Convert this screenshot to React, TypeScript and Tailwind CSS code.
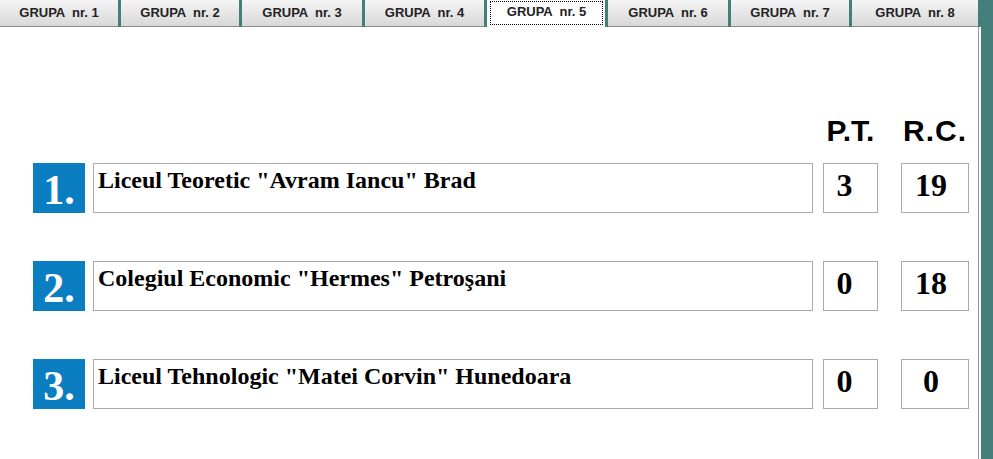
const tabs = [
  { label: 'GRUPA  nr. 1', w: 'w-[118px]' },
  { label: 'GRUPA  nr. 2', w: 'w-[118px]' },
  { label: 'GRUPA  nr. 3', w: 'w-[120px]' },
  { label: 'GRUPA  nr. 4', w: 'w-[119px]' },
  { label: 'GRUPA  nr. 5', w: 'w-[118px]', active: true },
  { label: 'GRUPA  nr. 6', w: 'w-[120px]' },
  { label: 'GRUPA  nr. 7', w: 'w-[118px]' },
  { label: 'GRUPA  nr. 8', w: 'w-[126px]' },
]

const rows = [
  { n: '1.', name: 'Liceul Teoretic "Avram Iancu" Brad', pt: '3', rc: '19' },
  { n: '2.', name: 'Colegiul Economic "Hermes" Petroşani', pt: '0', rc: '18' },
  { n: '3.', name: 'Liceul Tehnologic "Matei Corvin" Hunedoara', pt: '0', rc: '0' },
]

const serif = 'font-["Liberation_Serif",serif]'

export default function App() {
  return (
    <div className="w-[993px] h-[459px] bg-[#437e7b] overflow-hidden font-['Liberation_Sans',Arial,sans-serif]">
      {/* Tabs */}
      <div className="flex gap-[3px] h-[27px] w-[978px]">
        {tabs.map(t =>
          t.active ? (
            <div key={t.label} className={`${t.w} h-[27px] bg-white p-[1px_2px_2px_3px]`}>
              <div className="h-full border border-dotted border-black flex items-center justify-center pb-[2px]">
                <span className="whitespace-pre text-[13px] font-bold text-[#222]">{t.label}</span>
              </div>
            </div>
          ) : (
            <div key={t.label}
              className={`${t.w} h-[27px] bg-gradient-to-b from-[#f5f5f5] to-[#d8d8d8] border-b border-[#8c8c8c] flex items-center justify-center`}>
              <span className="whitespace-pre text-[13px] font-bold text-[#222]">{t.label}</span>
            </div>
          )
        )}
      </div>

      {/* Content */}
      <div className="w-[981px] h-[432px] bg-white pr-[2px]">
        <div className="h-full border-r border-[#999] pl-[33px] pt-[88px]">
          {/* Column headers */}
          <div className="flex h-[32px] text-[30px] leading-[32px] font-bold text-black">
            <div className="w-[780px]" />
            <div className="ml-[10px] w-[55px] text-center">P.T.</div>
            <div className="ml-[23px] w-[68px] text-center tracking-[1px]">R.C.</div>
          </div>

          <div className="mt-[16px] flex flex-col gap-[48px]">
            {rows.map(r => (
              <div key={r.n} className="flex h-[50px]">
                <div className={`w-[52px] h-[50px] bg-[#0b7ec2] text-white text-center text-[42px] leading-[54px] font-bold ${serif}`}>
                  {r.n}
                </div>
                <div className={`ml-[8px] w-[720px] h-[50px] border border-[#aaa] pl-[4px] pt-[2px] text-[24px] leading-[28px] font-bold text-black ${serif}`}>
                  {r.name}
                </div>
                <div className={`ml-[10px] w-[55px] h-[50px] border border-[#aaa] pt-[5px] pr-[12px] text-center text-[32px] leading-[32px] font-bold text-black ${serif}`}>
                  {r.pt}
                </div>
                <div className={`ml-[23px] w-[68px] h-[50px] border border-[#aaa] pt-[5px] pr-[8px] text-center text-[32px] leading-[32px] font-bold text-black ${serif}`}>
                  {r.rc}
                </div>
              </div>
            ))}
          </div>
        </div>
      </div>
    </div>
  )
}
